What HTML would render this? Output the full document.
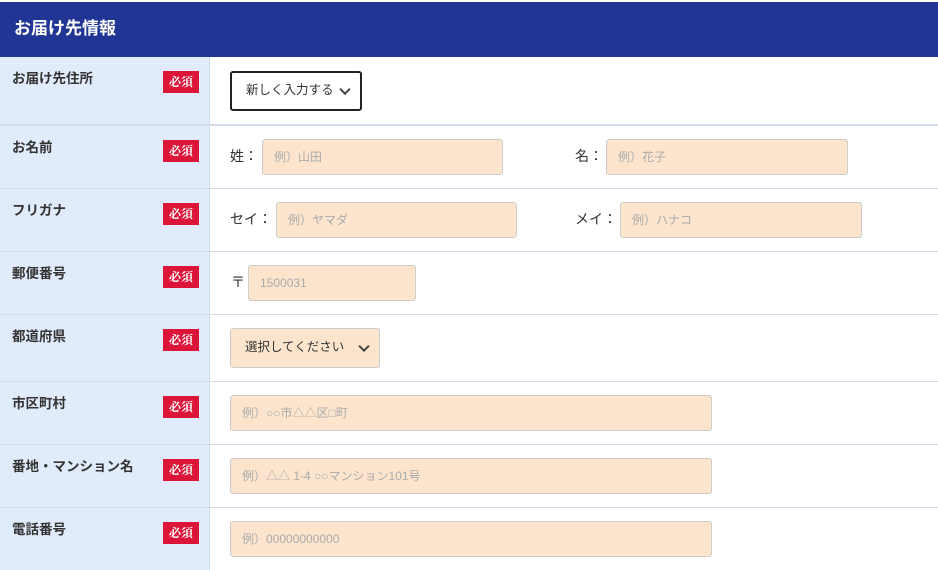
<!DOCTYPE html>
<html><head><meta charset="utf-8"><style>
*{margin:0;padding:0;box-sizing:border-box}
body{width:938px;height:568px;overflow:hidden;background:#fff;font-family:"Liberation Sans","Noto Sans CJK JP",sans-serif;position:relative;color:#333}
.hd{position:absolute;left:0;top:2px;width:938px;height:55px;background:#213594;color:#fff;font-weight:bold;font-size:17px;padding:12px 0 0 14px}
.row{position:absolute;left:0;width:938px;border-bottom:1px solid #d3dcea}
.lab{position:absolute;left:0;top:0;bottom:0;width:210px;background:#e0ebfb;border-right:1px solid #d3dcea;font-size:13.5px;font-weight:bold;color:#333;padding:10px 0 0 12px}
.bd{position:absolute;left:163px;top:14px;width:36px;height:22px;background:#dc1438;color:#fff;font-weight:bold;font-size:12px;text-align:center;line-height:22px;font-family:"Noto Serif CJK SC",serif}
.in{position:absolute;height:36px;background:#fce5cc;border:1px solid #ccc;border-radius:3px;color:#aaa;font-size:12px;line-height:34px;padding-left:11px}
.t{position:absolute;font-size:14px;color:#333}
.sel{position:absolute;border-radius:3px;font-size:12.5px;color:#333;padding-left:14px}
.sel:after{content:"";position:absolute;right:11px;top:50%;width:6px;height:6px;border-right:2px solid #444;border-bottom:2px solid #444;transform:translateY(-70%) rotate(45deg)}
</style></head><body>
<div class="hd">お届け先情報</div>
<div class="row" style="top:57px;height:69px;border-bottom:2px solid #d3dcea"><div class="lab">お届け先住所<span class="bd">必須</span></div>
<div class="sel" style="left:230px;top:14px;width:132px;height:40px;border:2px solid #222;line-height:34px">新しく入力する</div></div>
<div class="row" style="top:126px;height:63px"><div class="lab">お名前<span class="bd">必須</span></div>
<span class="t" style="left:230px;top:20px">姓：</span><div class="in" style="left:262px;top:13px;width:241px">例）山田</div>
<span class="t" style="left:575px;top:20px">名：</span><div class="in" style="left:606px;top:13px;width:242px">例）花子</div></div>
<div class="row" style="top:189px;height:63px"><div class="lab">フリガナ<span class="bd">必須</span></div>
<span class="t" style="left:230px;top:20px">セイ：</span><div class="in" style="left:276px;top:13px;width:241px">例）ヤマダ</div>
<span class="t" style="left:575px;top:20px">メイ：</span><div class="in" style="left:620px;top:13px;width:242px">例）ハナコ</div></div>
<div class="row" style="top:252px;height:63px"><div class="lab">郵便番号<span class="bd">必須</span></div>
<span class="t" style="left:231px;top:20px">〒</span><div class="in" style="left:248px;top:13px;width:168px">1500031</div></div>
<div class="row" style="top:315px;height:67px"><div class="lab">都道府県<span class="bd">必須</span></div>
<div class="sel" style="left:230px;top:13px;width:150px;height:40px;background:#fce5cc;border:1px solid #ccc;line-height:36px">選択してください</div></div>
<div class="row" style="top:382px;height:63px"><div class="lab">市区町村<span class="bd">必須</span></div>
<div class="in" style="left:230px;top:13px;width:482px">例）○○市△△区□町</div></div>
<div class="row" style="top:445px;height:63px"><div class="lab">番地・マンション名<span class="bd">必須</span></div>
<div class="in" style="left:230px;top:13px;width:482px">例）△△ 1-4 ○○マンション101号</div></div>
<div class="row" style="top:508px;height:62px;border:none"><div class="lab">電話番号<span class="bd">必須</span></div>
<div class="in" style="left:230px;top:13px;width:482px">例）00000000000</div></div>
</body></html>
